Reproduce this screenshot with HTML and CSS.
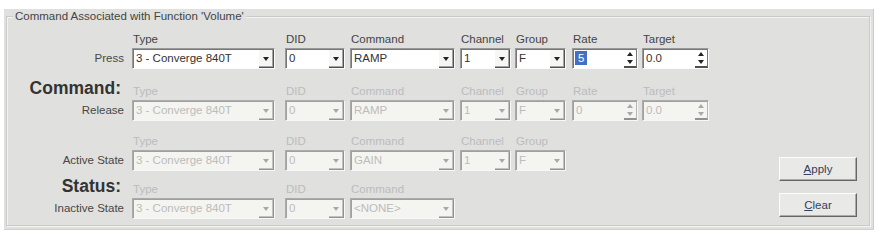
FILE: index.html
```html
<!DOCTYPE html>
<html lang="en">
<head>
    <link rel="stylesheet" href="styles.css">
    <meta charset="UTF-8">
    <title>Command Associated with Function</title>
</head>
<body>
    <div class="panel">
        <div class="group">
            <div class="group-title">Command Associated with Function 'Volume'</div>
            <div class="group-body">
                <div class="form">
                    <div class="row">
                        <div class="row-label"><span class="row-name">Press</span></div>
                        <div class="field w-type"><div class="caption">Type</div><div class="select"><span class="value">3 - Converge 840T</span><span class="drop"></span></div></div>
                        <div class="field w-did"><div class="caption">DID</div><div class="select"><span class="value">0</span><span class="drop"></span></div></div>
                        <div class="field w-cmd"><div class="caption">Command</div><div class="select"><span class="value">RAMP</span><span class="drop"></span></div></div>
                        <div class="field w-chan"><div class="caption">Channel</div><div class="select"><span class="value">1</span><span class="drop"></span></div></div>
                        <div class="field w-group"><div class="caption">Group</div><div class="select"><span class="value">F</span><span class="drop"></span></div></div>
                        <div class="field w-rate"><div class="caption">Rate</div><div class="select"><span class="value"><span class="sel">5</span></span><span class="spin"><span class="up"></span><span class="down"></span></span></div></div>
                        <div class="field w-target"><div class="caption">Target</div><div class="select"><span class="value">0.0</span><span class="spin"><span class="up"></span><span class="down"></span></span></div></div>
                    </div>

                    <div class="row release disabled">
                        <div class="row-label"><span class="heading">Command:</span><span class="row-name">Release</span></div>
                        <div class="field w-type"><div class="caption">Type</div><div class="select"><span class="value">3 - Converge 840T</span><span class="drop"></span></div></div>
                        <div class="field w-did"><div class="caption">DID</div><div class="select"><span class="value">0</span><span class="drop"></span></div></div>
                        <div class="field w-cmd"><div class="caption">Command</div><div class="select"><span class="value">RAMP</span><span class="drop"></span></div></div>
                        <div class="field w-chan"><div class="caption">Channel</div><div class="select"><span class="value">1</span><span class="drop"></span></div></div>
                        <div class="field w-group"><div class="caption">Group</div><div class="select"><span class="value">F</span><span class="drop"></span></div></div>
                        <div class="field w-rate"><div class="caption">Rate</div><div class="select"><span class="value">0</span><span class="spin"><span class="up"></span><span class="down"></span></span></div></div>
                        <div class="field w-target"><div class="caption">Target</div><div class="select"><span class="value">0.0</span><span class="spin"><span class="up"></span><span class="down"></span></span></div></div>
                    </div>

                    <div class="row active disabled">
                        <div class="row-label"><span class="row-name">Active State</span></div>
                        <div class="field w-type"><div class="caption">Type</div><div class="select"><span class="value">3 - Converge 840T</span><span class="drop"></span></div></div>
                        <div class="field w-did"><div class="caption">DID</div><div class="select"><span class="value">0</span><span class="drop"></span></div></div>
                        <div class="field w-cmd"><div class="caption">Command</div><div class="select"><span class="value">GAIN</span><span class="drop"></span></div></div>
                        <div class="field w-chan"><div class="caption">Channel</div><div class="select"><span class="value">1</span><span class="drop"></span></div></div>
                        <div class="field w-group"><div class="caption">Group</div><div class="select"><span class="value">F</span><span class="drop"></span></div></div>
                    </div>

                    <div class="row inactive disabled">
                        <div class="row-label"><span class="heading">Status:</span><span class="row-name">Inactive State</span></div>
                        <div class="field w-type"><div class="caption">Type</div><div class="select"><span class="value">3 - Converge 840T</span><span class="drop"></span></div></div>
                        <div class="field w-did"><div class="caption">DID</div><div class="select"><span class="value">0</span><span class="drop"></span></div></div>
                        <div class="field w-cmd"><div class="caption">Command</div><div class="select"><span class="value">&lt;NONE&gt;</span><span class="drop"></span></div></div>
                    </div>
                </div>

                <div class="actions">
                    <button type="button" class="btn"><u>A</u>pply</button>
                    <button type="button" class="btn"><u>C</u>lear</button>
                </div>
            </div>
        </div>
    </div>
</body>
</html>
```

FILE: styles.css
```css
body {
    margin: 0;
    background-color: #fff;
    font-family: "Liberation Sans", Arial, sans-serif;
    font-size: 11.5px;
    color: #444;
}

.panel {
    margin: 9px 5px 0 4px;
    padding: 7px 3px 3px 2px;
    background-color: #e0e0df;
    border-right: 1px solid #cbcbcb;
    border-bottom: 1px solid #cfcfcf;
}

.group {
    border: 1px solid #cacaca;
    box-shadow: inset 1px 1px 0 #f4f4f4, 1px 1px 0 #f4f4f4;
    padding: 0 0 6px 1px;
}

.group-title {
    width: fit-content;
    margin: -7px 0 0 5px;
    padding: 0 2px;
    line-height: 13px;
    background-color: #e0e0df;
    color: #444;
}

.group-body {
    display: flex;
    margin-top: 10px;
}

/* rows of selects */
.row {
    display: grid;
    grid-template-columns: 124px 153px 65px 110px 55px 57px 70px 67px;
}

.row.release {
    margin-top: 16px;
}

.row.active {
    margin-top: 14px;
}

.row.inactive {
    margin-top: 12px;
}

.row-label {
    display: flex;
    flex-direction: column;
    align-items: flex-end;
    justify-content: flex-end;
    padding-right: 8px;
}

.row-name {
    line-height: 21px;
    color: #474747;
}

.heading {
    font-size: 17.5px;
    font-weight: bold;
    line-height: 18px;
    margin: -6px 3px 3px 0;
    color: #333;
}

.caption {
    line-height: 12px;
    height: 12px;
    margin-bottom: 3px;
    padding-left: 1px;
    white-space: nowrap;
}

.w-type .select { width: 143px; }
.w-did .select { width: 60px; }
.w-cmd .select { width: 105px; }
.w-chan .select { width: 51px; }
.w-group .select { width: 51px; }
.w-rate .select { width: 66px; }
.w-target .select { width: 67px; }

.select {
    display: flex;
    height: 21px;
    box-sizing: border-box;
    border: 1px solid;
    border-color: #999 #fbfbfb #fbfbfb #999;
    box-shadow: inset 1px 1px 0 #777;
    background-color: #fff;
}

.value {
    flex: 1;
    padding-left: 3px;
    line-height: 19px;
    white-space: nowrap;
    overflow: hidden;
    color: #333;
}

.sel {
    background-color: #4470c4;
    color: #fff;
    padding: 1px 3px;
    margin-left: -1px;
}

.drop {
    width: 15px;
    margin-top: 1px;
    box-sizing: border-box;
    background-color: #f6f6f4;
    border-right: 1px solid #505050;
    border-bottom: 1px solid #505050;
    box-shadow: inset -1px -1px 0 #a5a5a5;
    display: flex;
    align-items: center;
    justify-content: center;
}

.drop::after {
    content: "";
    border-left: 3px solid transparent;
    border-right: 3px solid transparent;
    border-top: 4px solid #222;
    margin-top: 1px;
}

.spin {
    width: 13px;
    margin-top: 1px;
    display: flex;
    flex-direction: column;
    border-right: 1px solid #777;
    border-bottom: 2px solid #505050;
    box-sizing: border-box;
}

.spin span {
    flex: 1;
    display: flex;
    align-items: center;
    justify-content: center;
}

.spin .up::after {
    content: "";
    border-left: 3px solid transparent;
    border-right: 3px solid transparent;
    border-bottom: 4px solid #222;
}

.spin .down::after {
    content: "";
    border-left: 3px solid transparent;
    border-right: 3px solid transparent;
    border-top: 4px solid #222;
}

/* greyed out rows */
.disabled .caption,
.disabled .value {
    color: #bcbcbc;
}

.disabled .select {
    background-color: #f4f4f0;
    border-color: #ababab #f8f8f8 #f8f8f8 #ababab;
    box-shadow: inset 1px 1px 0 #a0a0a0;
}

.disabled .drop {
    background-color: #f4f4f0;
    border-color: #919191;
    box-shadow: inset -1px -1px 0 #c2c2c2;
}

.disabled .drop::after,
.disabled .spin .down::after {
    border-top-color: #a8a8a8;
}

.disabled .spin .up::after {
    border-bottom-color: #a8a8a8;
}

.disabled .spin {
    border-right-color: #b5b5b5;
    border-bottom-color: #919191;
}

/* buttons */
.actions {
    flex: 1;
    display: flex;
    flex-direction: column;
    align-items: flex-end;
    justify-content: flex-end;
    gap: 12px;
    padding: 0 12px 2px 0;
}

.btn {
    width: 78px;
    height: 24px;
    padding: 0;
    font-family: "Liberation Sans", Arial, sans-serif;
    font-size: 11.5px;
    color: #34405c;
    background-color: #e9e9e7;
    border: 1px solid;
    border-color: #fdfdfd #666 #666 #fdfdfd;
    box-shadow: inset -1px -1px 0 #ababab;
}
```
